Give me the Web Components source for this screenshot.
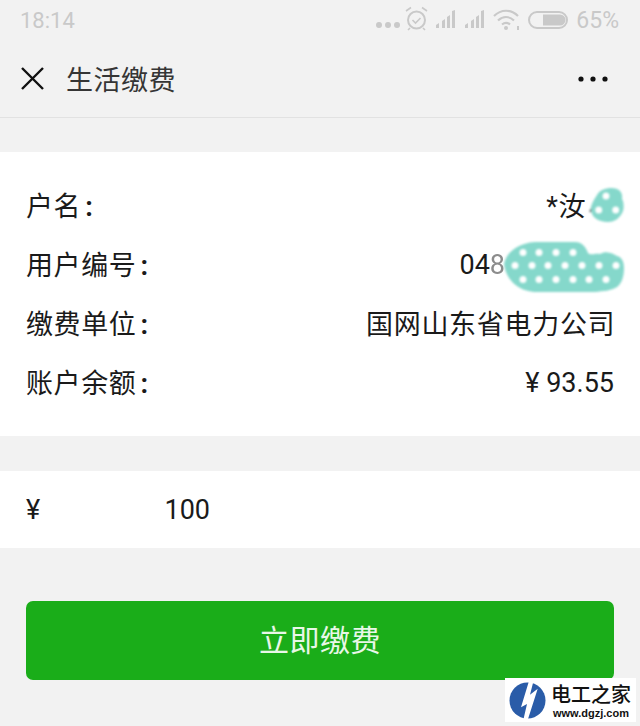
<!DOCTYPE html>
<html lang="zh">
<head>
<meta charset="utf-8">
<style>
  html, body { margin: 0; height: 726px; overflow: hidden; }
  body {
    background: #f2f2f2;
    color: #1a1a1a;
    font-family: Roboto, "Noto Sans CJK SC", sans-serif;
    font-size: 27px;
    position: relative;
  }
</style>
</head>
<body>
<status-bar></status-bar>
<nav-bar>生活缴费</nav-bar>

<info-card>
  <info-row label="户名" cjk><span style="margin-right:29px">*汝</span><privacy-blob kind="short"></privacy-blob></info-row>
  <info-row label="用户编号"><span style="margin-right:109px">04<span style="color:#8c8c8c;filter:blur(.7px)">8</span></span><privacy-blob kind="long"></privacy-blob></info-row>
  <info-row label="缴费单位" cjk>国网山东省电力公司</info-row>
  <info-row label="账户余额">¥ 93.55</info-row>
</info-card>

<amount-card value="100"></amount-card>
<pay-button>立即缴费</pay-button>
<site-mark></site-mark>

<script>
class StatusBar extends HTMLElement {
  constructor() {
    super();
    this.attachShadow({ mode: "open" });
    this.shadowRoot.innerHTML = `
      <style>
        :host { display: flex; height: 40px; align-items: center; justify-content: space-between; padding: 0 21px 0 20px; color: #c9c9c9; font-size: 22px; }
        .icons { display: flex; align-items: center; }
        .pct { margin-left: 8px; font-size: 23px; }
        svg { display: block; }
      </style>
      <span>18:14</span>
      <div class="icons">
        <svg width="200" height="40" viewBox="0 0 200 40" fill="#c9c9c9" stroke="none">
          <circle cx="11" cy="25" r="3"/><circle cx="20" cy="25" r="3"/><circle cx="29" cy="25" r="3"/>
          <g fill="none" stroke="#c9c9c9" stroke-width="2">
            <circle cx="48.500" cy="20" r="8.500"/>
            <path d="M44.500 20l3 3 5-5M38 11l5-3.500M59 11l-5-3.500M42 28l-2 2M55 28l2 2" stroke-width="1.600"/>
          </g>
          <path d="M68 25l3-2v5h-3zM74 21l3-2v9h-3zM79 17l3-2v13h-3zM84 11l3-1v18h-3z"/>
          <path d="M97 25l3-2v5h-3zM103 21l3-2v9h-3zM108 17l3-2v13h-3zM113 11l3-1v18h-3z"/>
          <g fill="none" stroke="#c9c9c9" stroke-width="2.200">
            <path d="M126 16c7-7 17-7 24 0"/><path d="M130 20.500c5-4.500 11-4.500 16 0"/><path d="M134 24.500c2.500-2 5.500-2 8 0"/>
          </g>
          <circle cx="138" cy="28" r="2"/><rect x="149" y="26" width="2" height="4"/>
          <rect x="161" y="12" width="38" height="16" rx="8" fill="none" stroke="#c9c9c9" stroke-width="2"/>
          <path d="M175 14.500h17a5.500 5.500 0 0 1 0 11h-17z"/>
        </svg>
        <span class="pct">65%</span>
      </div>`;
  }
}

class NavBar extends HTMLElement {
  constructor() {
    super();
    this.attachShadow({ mode: "open" });
    this.shadowRoot.innerHTML = `
      <style>
        :host { display: flex; height: 78px; box-sizing: border-box; border-bottom: 1px solid #e2e2e2; align-items: center; padding: 0 32px 0 20px; color: #353535; font-size: 27px; letter-spacing: .5px; }
        svg { display: block; flex: none; }
        .title { flex: 1; margin-left: 21px; }
      </style>
      <svg width="25" height="25" viewBox="0 0 25 25" fill="none" stroke="#111" stroke-width="2.400"><path d="M2 2l21 21M23 2L2 23"/></svg>
      <span class="title"><slot></slot></span>
      <svg width="30" height="6" viewBox="0 0 30 6" fill="#111"><circle cx="3" cy="3" r="2.600"/><circle cx="15" cy="3" r="2.600"/><circle cx="27" cy="3" r="2.600"/></svg>`;
  }
}

class InfoCard extends HTMLElement {
  constructor() {
    super();
    this.attachShadow({ mode: "open" });
    this.shadowRoot.innerHTML = `
      <style>
        :host { display: block; margin-top: 34px; height: 284px; box-sizing: border-box; background: #fff; padding: 25px 26px 0; }
      </style>
      <slot></slot>`;
  }
}

class InfoRow extends HTMLElement {
  constructor() {
    super();
    this.attachShadow({ mode: "open" });
    this.shadowRoot.innerHTML = `
      <style>
        :host { display: flex; height: 58.9px; align-items: center; justify-content: space-between; position: relative; }
        .label { letter-spacing: .6px; padding-bottom: 4px; }
        .colon { margin-left: 4px; font-weight: 700; }
        :host([cjk]) .value { letter-spacing: .7px; padding-bottom: 4px; margin-right: -1.300px; }
      </style>
      <span class="label"><span class="name"></span><span class="colon">:</span></span>
      <span class="value"><slot></slot></span>`;
    this.shadowRoot.querySelector(".name").textContent = this.getAttribute("label");
  }
}

// the smudge that hides the private part of a value
class PrivacyBlob extends HTMLElement {
  constructor() {
    super();
    this.attachShadow({ mode: "open" });
    const dots = (list, y) => list.map((x) => `<circle cx="${x}" cy="${y}" r="3.500" fill="#fff"/>`).join("");
    const short = this.getAttribute("kind") == "short";
    const shape = short
      ? `<path d="M0 25l3-7" stroke="#333" stroke-width="1.200" fill="none"/>
         <path fill="#85d8cb" d="M7 8C10 1 24-1 29 3c4 3 3 8 3 9 2 3 2 9 1 12-3 7-8 11-15 11C8 35 1 30 1 22 1 17 4 13 7 8z"/>
         ${dots([16], 9)}${dots([8.700, 25.700], 23)}`
      : `<path fill="#85d8cb" d="M1 22C3 10 16 1 32 0H72C80 0 83 6 85 11C88 14 92 11 97 12C104 8 110 12 114 14C119 15 121 20 121 26C121 36 118 42 114 45C108 49 100 49 92 50H34C16 50 3 38 1 22z"/>
         ${dots([20, 36, 53, 70], 10.500)}${dots([12, 29, 45, 62, 79, 96, 113], 23.500)}${dots([20, 36, 53, 70, 86, 103], 37.500)}`;
    this.shadowRoot.innerHTML = `
      <style>
        :host { display: block; position: absolute; }
        :host([kind="short"]) { right: -10px; top: 9.500px; width: 34px; height: 35px; }
        :host([kind="long"]) { right: -10px; top: 5.800px; width: 121px; height: 50px; }
        svg { display: block; filter: blur(.8px); overflow: visible; }
      </style>
      <svg width="100%" height="100%" viewBox="0 0 ${short ? "34 35" : "121 50"}">${shape}</svg>`;
  }
}

class AmountCard extends HTMLElement {
  constructor() {
    super();
    this.attachShadow({ mode: "open" });
    this.shadowRoot.innerHTML = `
      <style>
        :host { display: flex; margin-top: 35px; height: 77px; background: #fff; align-items: center; padding: 0 26px; }
        .unit { width: 138.500px; }
      </style>
      <span class="unit">¥</span>
      <span class="value"></span>`;
    this.shadowRoot.querySelector(".value").textContent = this.getAttribute("value");
  }
}

class PayButton extends HTMLElement {
  constructor() {
    super();
    this.attachShadow({ mode: "open" });
    this.shadowRoot.innerHTML = `
      <style>
        :host { display: flex; margin: 53px 26px 0; height: 79px; box-sizing: border-box; padding-bottom: 6px; border-radius: 7px; background: #1aad19; color: #e8f7e8; align-items: center; justify-content: center; font-size: 30px; letter-spacing: .5px; }
      </style>
      <slot></slot>`;
  }
}

class SiteMark extends HTMLElement {
  constructor() {
    super();
    this.attachShadow({ mode: "open" });
    this.shadowRoot.innerHTML = `
      <style>
        :host { position: absolute; left: 505px; top: 678px; width: 131px; height: 44px; background: #fff; display: flex; align-items: center; padding-left: 4px; box-sizing: border-box; color: #111; }
        svg { display: block; flex: none; }
        .text { margin-left: 4px; display: flex; flex-direction: column; align-items: center; }
        .cn { font: 500 20px/25px "Noto Sans CJK SC", sans-serif; }
        .url { font: bold 11px/14px "Liberation Sans", sans-serif; }
      </style>
      <svg width="38" height="40" viewBox="0 0 38 40">
        <circle cx="18.500" cy="20.500" r="18" fill="#2a5ca8"/>
        <path d="M20 1h4.500L21 14.700 28.700 8.700 18.700 40H14.300L18 24 12 27.300z" fill="#fff"/>
      </svg>
      <div class="text"><span class="cn">电工之家</span><span class="url">www.dgzj.com</span></div>`;
  }
}

customElements.define("status-bar", StatusBar);
customElements.define("nav-bar", NavBar);
customElements.define("info-card", InfoCard);
customElements.define("info-row", InfoRow);
customElements.define("privacy-blob", PrivacyBlob);
customElements.define("amount-card", AmountCard);
customElements.define("pay-button", PayButton);
customElements.define("site-mark", SiteMark);
</script>
</body>
</html>
